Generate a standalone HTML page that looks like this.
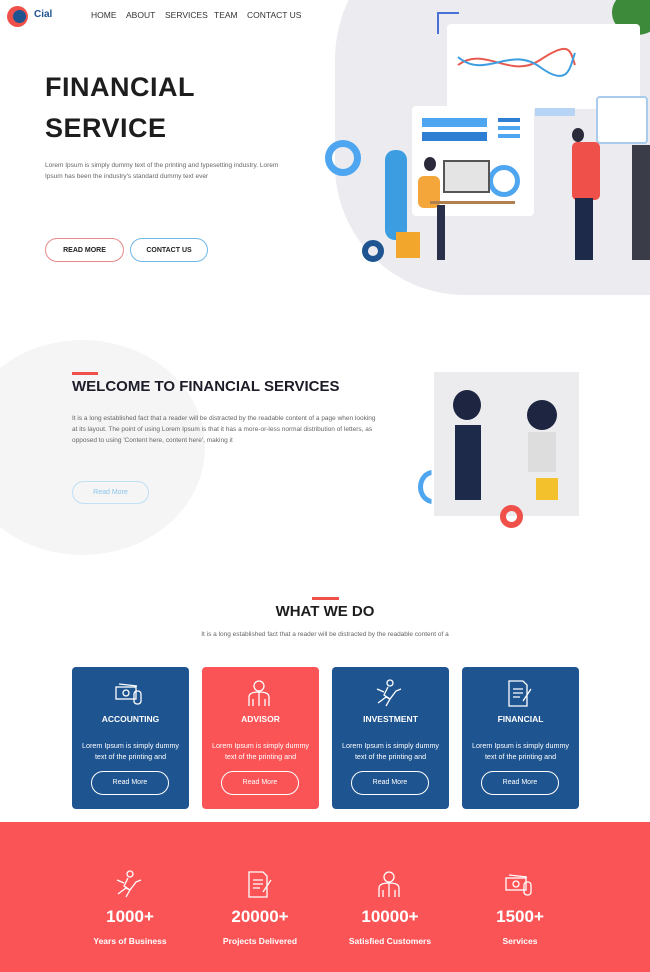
<!DOCTYPE html>
<html><head><meta charset="utf-8"><style>
*{margin:0;padding:0;box-sizing:border-box}
body{width:650px;height:972px;position:relative;overflow:hidden;background:#fff;font-family:"Liberation Sans",sans-serif;color:#222}
.a{position:absolute}
.nav{top:10px;font-size:8.5px;color:#333}
h1{font-size:27px;font-weight:900;color:#1d1d1d;letter-spacing:0.5px;line-height:41px}
.p{font-size:6.5px;color:#666;line-height:11px}
.btn{border-radius:13px;font-size:7px;font-weight:bold;display:flex;align-items:center;justify-content:center}
.card{top:667px;width:117px;height:142px;border-radius:4px;background:#1e5490;color:#fff;text-align:center}
.card .t{position:absolute;top:47px;width:100%;font-size:8.5px;font-weight:bold}
.card .d{position:absolute;top:73px;width:100%;font-size:7.2px;line-height:11px}
.card .b{position:absolute;top:104px;left:19px;width:78px;height:24px;border:1.5px solid #fff;border-radius:12px;font-size:7px;line-height:21px}
.card svg{position:absolute;top:12px;left:42px}
.st{top:822px;width:162px;text-align:center;color:#fff}
.st .n{position:absolute;top:85px;width:100%;font-size:17px;font-weight:900}
.st .l{position:absolute;top:114px;width:100%;font-size:8.5px;font-weight:bold}
.st svg{position:absolute;top:48px;left:65px}
</style></head><body>
<div class="a" style="left:335px;top:-80px;width:420px;height:375px;background:#ececf0;border-radius:140px 0 0 130px"></div>
<div class="a" style="left:612px;top:-10px;width:50px;height:45px;background:#3d8a3a;border-radius:50%"></div>
<div class="a" style="left:437px;top:12px;width:22px;height:22px;border-left:2px solid #4a6fd6;border-top:2px solid #4a6fd6"></div>
<div class="a" style="left:447px;top:24px;width:193px;height:85px;background:#fff;border-radius:4px"></div>
<svg class="a" style="left:455px;top:45px" width="125" height="35"><path d="M3 20 C30 0 55 35 85 15 S115 5 120 20" stroke="#e85a4f" stroke-width="2" fill="none"/><path d="M3 12 C30 35 55 0 85 22 S115 20 120 8" stroke="#3c9ee0" stroke-width="2" fill="none"/></svg>
<div class="a" style="left:596px;top:96px;width:52px;height:48px;border:2px solid #a9cbee;border-radius:4px;background:#fff"></div>
<div class="a" style="left:412px;top:106px;width:122px;height:110px;background:#fff;border-radius:4px"></div>
<div class="a" style="left:422px;top:118px;width:65px;height:9px;background:#4ea6f0"></div>
<div class="a" style="left:422px;top:132px;width:65px;height:9px;background:#2e7fd3"></div>
<div class="a" style="left:498px;top:118px;width:22px;height:4px;background:#2e7fd3"></div>
<div class="a" style="left:498px;top:126px;width:22px;height:4px;background:#4ea6f0"></div>
<div class="a" style="left:498px;top:134px;width:22px;height:4px;background:#4ea6f0"></div>
<div class="a" style="left:535px;top:108px;width:40px;height:8px;background:#b7d4f5"></div>
<div class="a" style="left:325px;top:140px;width:36px;height:36px;border:7px solid #4ea6f0;border-radius:50%"></div>
<div class="a" style="left:362px;top:240px;width:22px;height:22px;border:6px solid #1e5490;border-radius:50%"></div>
<div class="a" style="left:488px;top:165px;width:32px;height:32px;border:5px solid #4ea6f0;border-radius:50%"></div>
<div class="a" style="left:385px;top:150px;width:22px;height:90px;background:#3c9ee0;border-radius:10px"></div>
<div class="a" style="left:396px;top:232px;width:24px;height:26px;background:#f2a72c"></div>
<div class="a" style="left:443px;top:160px;width:47px;height:33px;background:#e4e4e4;border:2px solid #555"></div>
<div class="a" style="left:418px;top:176px;width:22px;height:32px;background:#f5a63a;border-radius:6px"></div>
<div class="a" style="left:424px;top:157px;width:12px;height:14px;background:#2a2a3a;border-radius:50%"></div>
<div class="a" style="left:430px;top:201px;width:85px;height:3px;background:#b08050"></div>
<div class="a" style="left:437px;top:205px;width:8px;height:55px;background:#2a2f4a"></div>
<div class="a" style="left:572px;top:128px;width:12px;height:14px;background:#2a2a3a;border-radius:50%"></div>
<div class="a" style="left:572px;top:142px;width:28px;height:58px;background:#f0504a;border-radius:5px"></div>
<div class="a" style="left:575px;top:198px;width:18px;height:62px;background:#1d2a4a"></div>
<div class="a" style="left:632px;top:145px;width:18px;height:115px;background:#3a3d48"></div>
<div class="a" style="left:7px;top:6px;width:21px;height:21px;border-radius:50%;background:#f0504a"></div>
<div class="a" style="left:13px;top:10px;width:13px;height:13px;border-radius:50%;background:#1e5490"></div>
<div class="a" style="left:34px;top:9px;font-size:10px;font-weight:bold;color:#1e5490">Cial</div>
<div class="a nav" style="left:91px">HOME</div>
<div class="a nav" style="left:126px">ABOUT</div>
<div class="a nav" style="left:165px">SERVICES</div>
<div class="a nav" style="left:214px">TEAM</div>
<div class="a nav" style="left:247px">CONTACT US</div>
<h1 class="a" style="left:45px;top:67px">FINANCIAL<br>SERVICE</h1>
<div class="a p" style="left:45px;top:160px;width:250px">Lorem Ipsum is simply dummy text of the printing and typesetting industry. Lorem Ipsum has been the industry's standard dummy text ever</div>
<div class="a btn" style="left:45px;top:238px;width:79px;height:24px;border:1.5px solid #e88a8a">READ MORE</div>
<div class="a btn" style="left:130px;top:238px;width:78px;height:24px;border:1.5px solid #6eb8e6">CONTACT US</div>
<div class="a" style="left:-40px;top:340px;width:245px;height:215px;border-radius:50%;background:#f5f5f6"></div>
<div class="a" style="left:72px;top:372px;width:26px;height:3px;background:#f0504a"></div>
<div class="a" style="left:72px;top:378px;font-size:15px;font-weight:900;color:#1d1d2a">WELCOME TO FINANCIAL SERVICES</div>
<div class="a p" style="left:72px;top:413px;width:305px">It is a long established fact that a reader will be distracted by the readable content of a page when looking at its layout. The point of using Lorem Ipsum is that it has a more-or-less normal distribution of letters, as opposed to using 'Content here, content here', making it</div>
<div class="a btn" style="left:72px;top:481px;width:77px;height:23px;border:1.5px solid #bfe0f5;color:#8cc4ea;font-weight:normal">Read More</div>
<div class="a" style="left:434px;top:372px;width:145px;height:144px;background:#ececee"></div>
<div class="a" style="left:453px;top:390px;width:28px;height:30px;background:#1d2540;border-radius:50%"></div>
<div class="a" style="left:455px;top:425px;width:26px;height:75px;background:#1d2a4a"></div>
<div class="a" style="left:527px;top:400px;width:30px;height:30px;background:#1d2540;border-radius:50%"></div>
<div class="a" style="left:528px;top:432px;width:28px;height:40px;background:#ddd"></div>
<div class="a" style="left:536px;top:478px;width:22px;height:22px;background:#f2c12c"></div>
<div class="a" style="left:418px;top:470px;width:30px;height:34px;border:5px solid #4ea6f0;border-radius:50%;clip-path:inset(0 55% 0 0)"></div>
<div class="a" style="left:500px;top:505px;width:23px;height:23px;border:6px solid #f0504a;border-radius:50%"></div>
<div class="a" style="left:312px;top:597px;width:27px;height:3px;background:#f0504a"></div>
<div class="a" style="left:0;top:603px;width:650px;text-align:center;font-size:15px;font-weight:900;color:#1d1d1d">WHAT WE DO</div>
<div class="a p" style="left:0;top:629px;width:650px;text-align:center">It is a long established fact that a reader will be distracted by the readable content of a</div>
<div class="a card" style="left:72px"><svg width="32" height="30" fill="none" stroke="#fff" stroke-width="1.3"><rect x="2" y="8" width="20" height="12"/><circle cx="12" cy="14" r="3"/><rect x="20" y="12" width="7" height="13" rx="3"/><path d="M5 5l18 2"/></svg><div class="t">ACCOUNTING</div><div class="d">Lorem Ipsum is simply dummy<br>text of the printing and</div><div class="b">Read More</div></div>
<div class="a card" style="left:202px;background:#fa5457"><svg width="32" height="30" fill="none" stroke="#fff" stroke-width="1.3"><circle cx="15" cy="7" r="5"/><path d="M5 27V18q0-5 10-5t10 5v9M15 13v14M9 20v7M21 20v7"/></svg><div class="t">ADVISOR</div><div class="d">Lorem Ipsum is simply dummy<br>text of the printing and</div><div class="b">Read More</div></div>
<div class="a card" style="left:332px"><svg width="32" height="30" fill="none" stroke="#fff" stroke-width="1.3"><circle cx="16" cy="4" r="3"/><path d="M14 8l-4 8 6 4-4 7M4 24l8-6 4 2 6-8 5-2M3 10l7 3"/></svg><div class="t">INVESTMENT</div><div class="d">Lorem Ipsum is simply dummy<br>text of the printing and</div><div class="b">Read More</div></div>
<div class="a card" style="left:462px"><svg width="32" height="30" fill="none" stroke="#fff" stroke-width="1.3"><path d="M5 2h14l4 4v21H5z M9 10h10M9 14h10M9 18h7M27 10l-8 12"/></svg><div class="t">FINANCIAL</div><div class="d">Lorem Ipsum is simply dummy<br>text of the printing and</div><div class="b">Read More</div></div>
<div class="a" style="left:0;top:822px;width:650px;height:150px;background:#fa5457"></div>
<div class="a st" style="left:49px"><svg width="32" height="32" fill="none" stroke="#fff" stroke-width="1.3"><circle cx="16" cy="4" r="3"/><path d="M14 8l-4 8 6 4-4 7M4 24l8-6 4 2 6-8 5-2M3 10l7 3"/></svg><div class="n">1000+</div><div class="l">Years of Business</div></div>
<div class="a st" style="left:179px"><svg width="32" height="32" fill="none" stroke="#fff" stroke-width="1.3"><path d="M5 2h14l4 4v21H5z M9 10h10M9 14h10M9 18h7M27 10l-8 12"/></svg><div class="n">20000+</div><div class="l">Projects Delivered</div></div>
<div class="a st" style="left:309px"><svg width="32" height="32" fill="none" stroke="#fff" stroke-width="1.3"><circle cx="15" cy="7" r="5"/><path d="M5 27V18q0-5 10-5t10 5v9M15 13v14M9 20v7M21 20v7"/></svg><div class="n">10000+</div><div class="l">Satisfied Customers</div></div>
<div class="a st" style="left:439px"><svg width="32" height="32" fill="none" stroke="#fff" stroke-width="1.3"><rect x="2" y="8" width="20" height="12"/><circle cx="12" cy="14" r="3"/><rect x="20" y="12" width="7" height="13" rx="3"/><path d="M5 5l18 2"/></svg><div class="n">1500+</div><div class="l">Services</div></div>
</body></html>
